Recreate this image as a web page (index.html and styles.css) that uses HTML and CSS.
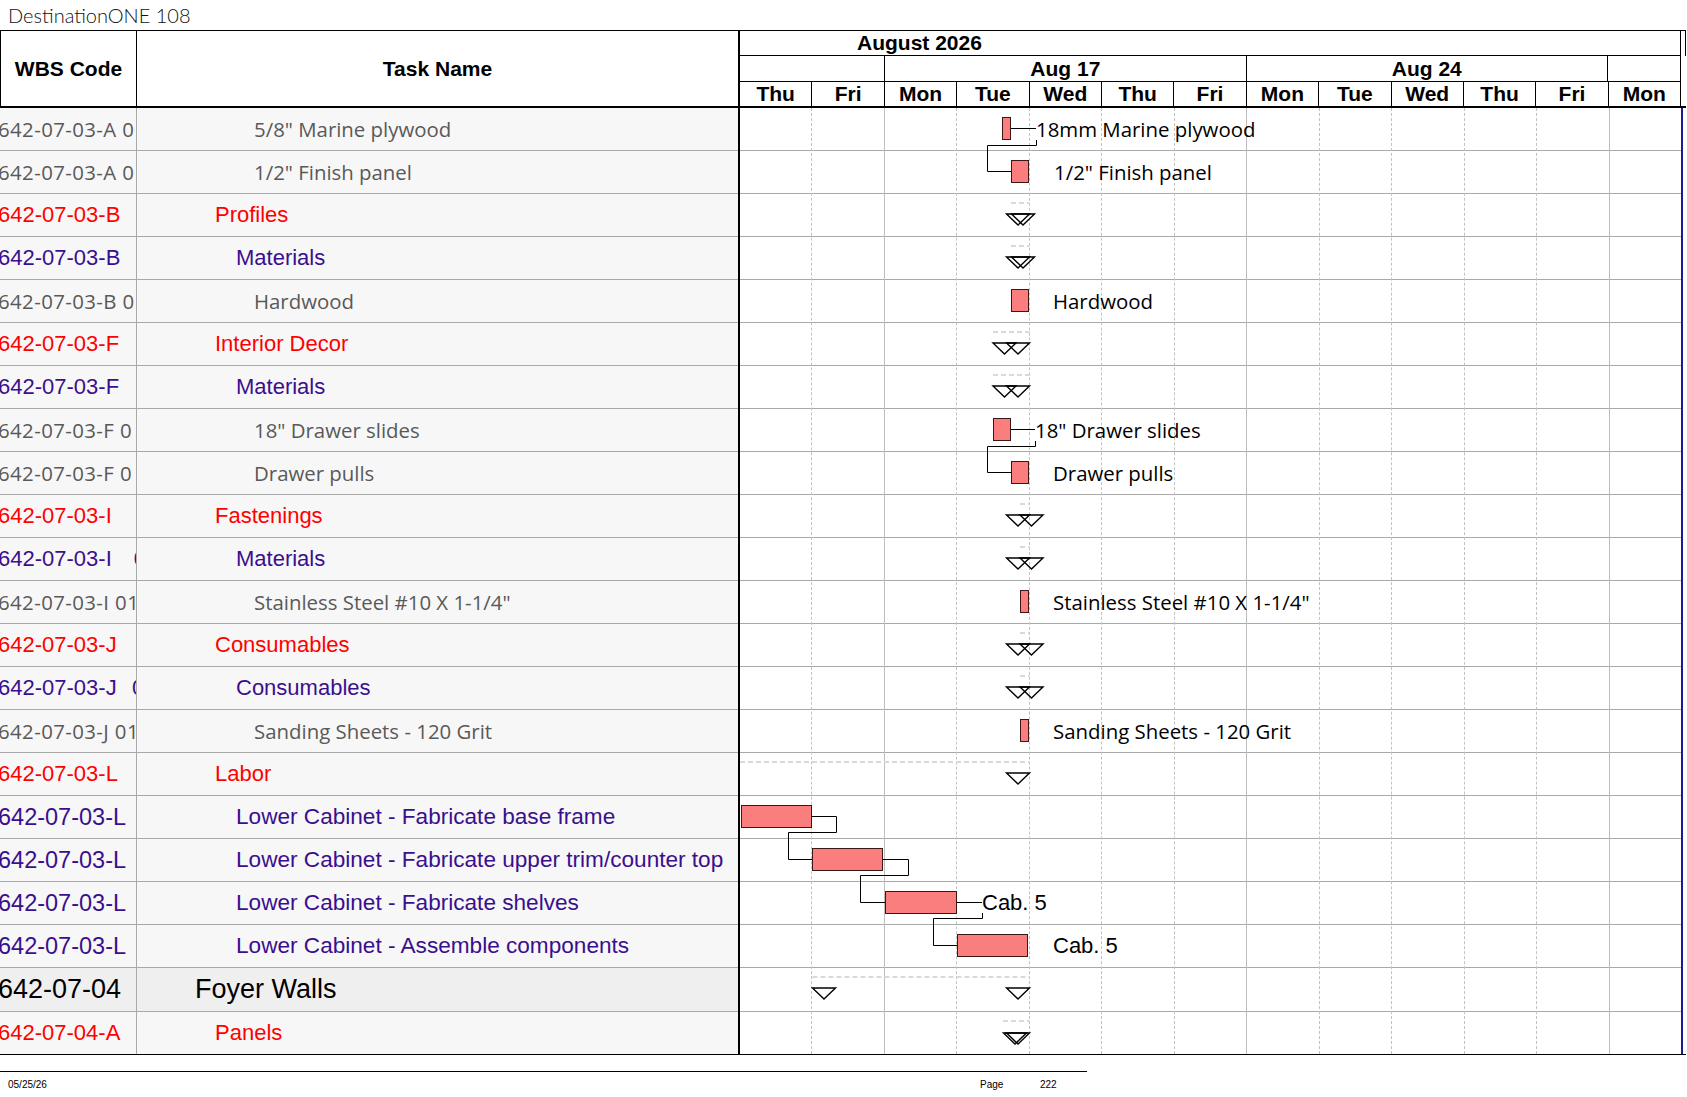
FILE: index.html
```html
<!DOCTYPE html>
<html lang="en">
<head>
<meta charset="utf-8">
<title>DestinationONE 108</title>
<link rel="stylesheet" href="styles.css">
</head>
<body>
<div class="title">DestinationONE 108</div>
<div class="sheet">
  <div class="head">
    <div class="hcell wbs">WBS Code</div>
    <div class="hcell task">Task Name</div>
    <div class="tscale">
      <div class="tier month">
        <div class="mcell">August 2026</div>
        <div class="mtail"></div>
      </div>
      <div class="tier weeks">
        <div class="wk s2"></div>
        <div class="wk s5">Aug 17</div>
        <div class="wk s5">Aug 24</div>
        <div class="wk s1"></div>
      </div>
      <div class="tier days">
        <div class="day">Thu</div><div class="day">Fri</div><div class="day">Mon</div><div class="day">Tue</div><div class="day">Wed</div><div class="day">Thu</div><div class="day">Fri</div><div class="day">Mon</div><div class="day">Tue</div><div class="day">Wed</div><div class="day">Thu</div><div class="day">Fri</div><div class="day">Mon</div>
      </div>
    </div>
  </div>
  <div class="body">
    <div class="grid">
      <div class="row item"><div class="c-wbs"><span>642-07-03-A 0</span></div><div class="c-task"><span>5/8" Marine plywood</span></div></div>
      <div class="row item"><div class="c-wbs"><span>642-07-03-A 0</span></div><div class="c-task"><span>1/2" Finish panel</span></div></div>
      <div class="row sum"><div class="c-wbs"><span>642-07-03-B</span></div><div class="c-task"><span>Profiles</span></div></div>
      <div class="row mat"><div class="c-wbs"><span>642-07-03-B</span></div><div class="c-task"><span>Materials</span></div></div>
      <div class="row item"><div class="c-wbs"><span>642-07-03-B 0</span></div><div class="c-task"><span>Hardwood</span></div></div>
      <div class="row sum"><div class="c-wbs"><span>642-07-03-F</span></div><div class="c-task"><span>Interior Decor</span></div></div>
      <div class="row mat"><div class="c-wbs"><span>642-07-03-F</span></div><div class="c-task"><span>Materials</span></div></div>
      <div class="row item"><div class="c-wbs"><span>642-07-03-F 0</span></div><div class="c-task"><span>18" Drawer slides</span></div></div>
      <div class="row item"><div class="c-wbs"><span>642-07-03-F 0</span></div><div class="c-task"><span>Drawer pulls</span></div></div>
      <div class="row sum"><div class="c-wbs"><span>642-07-03-I</span></div><div class="c-task"><span>Fastenings</span></div></div>
      <div class="row mat"><div class="c-wbs"><span>642-07-03-I&emsp;0</span></div><div class="c-task"><span>Materials</span></div></div>
      <div class="row item"><div class="c-wbs"><span>642-07-03-I 01</span></div><div class="c-task"><span>Stainless Steel #10 X 1-1/4"</span></div></div>
      <div class="row sum"><div class="c-wbs"><span>642-07-03-J</span></div><div class="c-task"><span>Consumables</span></div></div>
      <div class="row mat"><div class="c-wbs"><span>642-07-03-J&ensp;&thinsp;0</span></div><div class="c-task"><span>Consumables</span></div></div>
      <div class="row item"><div class="c-wbs"><span>642-07-03-J 01</span></div><div class="c-task"><span>Sanding Sheets - 120 Grit</span></div></div>
      <div class="row sum"><div class="c-wbs"><span>642-07-03-L</span></div><div class="c-task"><span>Labor</span></div></div>
      <div class="row mat lab"><div class="c-wbs"><span>642-07-03-L</span></div><div class="c-task"><span>Lower Cabinet - Fabricate base frame</span></div></div>
      <div class="row mat lab"><div class="c-wbs"><span>642-07-03-L</span></div><div class="c-task"><span>Lower Cabinet - Fabricate upper trim/counter top</span></div></div>
      <div class="row mat lab"><div class="c-wbs"><span>642-07-03-L</span></div><div class="c-task"><span>Lower Cabinet - Fabricate shelves</span></div></div>
      <div class="row mat lab"><div class="c-wbs"><span>642-07-03-L</span></div><div class="c-task"><span>Lower Cabinet - Assemble components</span></div></div>
      <div class="row top big"><div class="c-wbs"><span>642-07-04</span></div><div class="c-task"><span>Foyer Walls</span></div></div>
      <div class="row sum last"><div class="c-wbs"><span>642-07-04-A</span></div><div class="c-task"><span>Panels</span></div></div>
    </div>
    <div class="chart">
      <div class="cols">
        <div class="col"></div><div class="col mon"></div><div class="col"></div><div class="col"></div><div class="col"></div><div class="col"></div><div class="col mon"></div><div class="col"></div><div class="col"></div><div class="col"></div><div class="col"></div><div class="col mon"></div><div class="col"></div>
      </div>
      <div class="crow"></div><div class="crow"></div><div class="crow"></div><div class="crow"></div><div class="crow"></div><div class="crow"></div><div class="crow"></div><div class="crow"></div><div class="crow"></div><div class="crow"></div><div class="crow"></div><div class="crow"></div><div class="crow"></div><div class="crow"></div><div class="crow"></div><div class="crow"></div><div class="crow"></div><div class="crow"></div><div class="crow"></div><div class="crow"></div><div class="crow big"></div><div class="crow last"></div>
      <svg class="gfx" width="941" height="946" viewBox="0 0 941 946">
        <g class="sumline">
          <line x1="271" y1="95" x2="289.5" y2="95"/>
          <line x1="271" y1="138" x2="289.5" y2="138"/>
          <line x1="253" y1="224" x2="289.5" y2="224"/>
          <line x1="253" y1="267" x2="289.5" y2="267"/>
          <line x1="280" y1="396" x2="289.5" y2="396"/>
          <line x1="280" y1="439" x2="289.5" y2="439"/>
          <line x1="280" y1="525" x2="289.5" y2="525"/>
          <line x1="280" y1="568" x2="289.5" y2="568"/>
          <line x1="0" y1="654" x2="289.5" y2="654"/>
          <line x1="72.4" y1="869" x2="289.5" y2="869"/>
          <line x1="263" y1="913" x2="289.5" y2="913"/>
        </g>
        <g class="tri">
          <polygon points="266.5,106 289.5,106 278,117"/><polygon points="271.5,106 294.5,106 283,117"/>
          <polygon points="266.5,149 289.5,149 278,160"/><polygon points="271.5,149 294.5,149 283,160"/>
          <polygon points="253,235 276,235 264.5,246"/><polygon points="266.5,235 289.5,235 278,246"/>
          <polygon points="253,278 276,278 264.5,289"/><polygon points="266.5,278 289.5,278 278,289"/>
          <polygon points="266.5,407 289.5,407 278,418"/><polygon points="280,407 303,407 291.5,418"/>
          <polygon points="266.5,450 289.5,450 278,461"/><polygon points="280,450 303,450 291.5,461"/>
          <polygon points="266.5,536 289.5,536 278,547"/><polygon points="280,536 303,536 291.5,547"/>
          <polygon points="266.5,579 289.5,579 278,590"/><polygon points="280,579 303,579 291.5,590"/>
          <polygon points="266.5,665 289.5,665 278,676"/>
          <polygon points="72.5,880 95.5,880 84,891"/><polygon points="266.5,880 289.5,880 278,891"/>
          <polygon points="263.5,925 286.5,925 275,936"/><polygon points="266.5,925 289.5,925 278,936"/>
        </g>
        <g class="link">
          <path d="M271 20.5 H296"/>
          <path d="M296.5 32 V37.5 H247.5 V63.5 H271"/>
          <path d="M271 321.5 H295"/>
          <path d="M295.5 333 V338.5 H247.5 V364.5 H271"/>
          <path d="M72 708.5 H96.5 V724.5 H48.5 V751.5 H72"/>
          <path d="M143 751.5 H168.5 V767.5 H120.5 V794.5 H145"/>
          <path d="M217 794.5 H242"/>
          <path d="M242.5 805 V810.5 H193.5 V837.5 H217"/>
        </g>
        <g class="bar">
          <rect x="262.5" y="9.5" width="8" height="22"/>
          <rect x="271.5" y="52.5" width="17" height="22"/>
          <rect x="271.5" y="181.5" width="17" height="22"/>
          <rect x="253.5" y="310.5" width="17" height="22"/>
          <rect x="271.5" y="353.5" width="17" height="22"/>
          <rect x="280.5" y="482.5" width="8" height="22"/>
          <rect x="280.5" y="611.5" width="8" height="22"/>
          <rect x="1.5" y="697.5" width="70" height="22"/>
          <rect x="72.5" y="740.5" width="70" height="22"/>
          <rect x="145.5" y="783.5" width="71" height="22"/>
          <rect x="217.5" y="826.5" width="70" height="22"/>
        </g>
      </svg>
      <span class="lbl cal" style="left:296px;top:20.5px">18mm Marine plywood</span>
      <span class="lbl cal" style="left:314px;top:63.5px">1/2" Finish panel</span>
      <span class="lbl cal" style="left:313px;top:192.5px">Hardwood</span>
      <span class="lbl cal" style="left:295px;top:321.5px">18" Drawer slides</span>
      <span class="lbl cal" style="left:313px;top:364.5px">Drawer pulls</span>
      <span class="lbl cal" style="left:313px;top:493.5px">Stainless Steel #10 X 1-1/4"</span>
      <span class="lbl cal" style="left:313px;top:622.5px">Sanding Sheets - 120 Grit</span>
      <span class="lbl ari" style="left:242px;top:794.5px">Cab. 5</span>
      <span class="lbl ari" style="left:313px;top:837.5px">Cab. 5</span>
    </div>
  </div>
</div>
<div class="footer">
  <div class="f-date">05/25/26</div>
  <div class="f-page">Page</div>
  <div class="f-num">222</div>
</div>
</body>
</html>
```

FILE: styles.css
```css
* { box-sizing: border-box; }

body {
  margin: 0;
  width: 1687px;
  background: #ffffff;
  color: #000000;
  font-family: "Liberation Sans", Arial, sans-serif;
}

.title {
  height: 30px;
  padding-left: 8px;
  font-family: Lato, "Open Sans", sans-serif;
  font-weight: 300;
  font-size: 20px;
  line-height: 30px;
  color: #111111;
}

.sheet {
  width: 1686px;
  border-top: 1px solid #000;
  border-bottom: 1px solid #000;
}

/* ---------- header ---------- */
.head {
  display: flex;
  height: 77px;
  border-bottom: 2px solid #000;
}

.hcell {
  display: flex;
  align-items: center;
  justify-content: center;
  font-weight: bold;
  font-size: 21px;
}

.hcell.wbs {
  width: 137px;
  border-left: 1px solid #000;
  border-right: 1px solid #000;
}

.hcell.task {
  width: 603px;
  border-right: 2px solid #000;
}

.tscale {
  width: 946px;
  display: flex;
  flex-direction: column;
  font-weight: bold;
  font-size: 21px;
}

.tier {
  display: flex;
}

.month {
  height: 25px;
}

.mcell {
  width: 941px;
  border-right: 1px solid #000;
  border-bottom: 1px solid #000;
  padding-left: 117px;
  line-height: 24px;
}

.mtail {
  width: 5px;
  border-right: 1px solid #000;
}

.weeks {
  width: 941px;
  height: 26px;
  border-bottom: 1px solid #000;
}

.wk {
  flex-basis: 0;
  border-right: 1px solid #000;
  text-align: center;
  line-height: 25px;
}

.wk.s1 { flex-grow: 1; }
.wk.s2 { flex-grow: 2; }
.wk.s5 { flex-grow: 5; }

.days {
  width: 941px;
  height: 24px;
}

.day {
  flex: 1 1 0;
  border-right: 1px solid #000;
  text-align: center;
  line-height: 24px;
}

/* ---------- body ---------- */
.body {
  display: flex;
}

.grid {
  width: 740px;
  border-right: 2px solid #000;
}

.row {
  display: grid;
  grid-template-columns: 137px 1fr;
  height: 43px;
  border-bottom: 1px solid #a9a9a9;
  background: #f7f7f7;
  font-size: 22px;
}

.row.big {
  height: 44px;
  background: #efefef;
}

.row.last {
  height: 42px;
  border-bottom: none;
}

.c-wbs {
  display: flex;
  align-items: center;
  overflow: hidden;
  white-space: nowrap;
  border-right: 1px solid #a9a9a9;
}

.c-wbs span {
  margin-left: -2px;
}

.c-task {
  display: flex;
  align-items: center;
  overflow: hidden;
  white-space: nowrap;
}

.row.sum { color: #ff0000; }
.row.sum .c-task { padding-left: 78px; }

.row.mat { color: #3a0f8e; }
.row.mat .c-task { padding-left: 99px; }

.row.lab .c-task { font-size: 22.6px; }
.row.lab .c-wbs { font-size: 23.5px; }

.row.item {
  color: #595959;
  font-family: "Open Sans", sans-serif;
  font-size: 20.4px;
}
.row.item .c-wbs span { letter-spacing: 0.4px; }
.row.item .c-task { padding-left: 117px; }

.row.top {
  color: #000000;
  font-size: 27px;
}
.row.top .c-task { padding-left: 58px; }

/* ---------- chart ---------- */
.chart {
  position: relative;
  width: 943px;
  border-right: 2px solid #1c1c92;
}

.cols {
  position: absolute;
  inset: 0;
  display: flex;
}

.col {
  flex: 1 1 0;
  border-right: 1px dashed #c2c2c2;
}

.col.mon {
  border-right: 1px solid #bdbdbd;
}

.col:last-child {
  border-right: none;
}

.crow {
  height: 43px;
  border-bottom: 1px solid #a9a9a9;
}

.crow.big { height: 44px; }
.crow.last { height: 42px; border-bottom: none; }

.gfx {
  position: absolute;
  left: 0;
  top: 0;
  overflow: visible;
}

.sumline line {
  stroke: #d9d9d9;
  stroke-width: 2;
  stroke-dasharray: 5 3;
}

.tri polygon {
  fill: none;
  stroke: #000;
  stroke-width: 1.4;
  stroke-linejoin: miter;
}

.link path {
  fill: none;
  stroke: #000;
  stroke-width: 1;
}

.bar rect {
  fill: #fa7e7e;
  stroke: #3a1818;
  stroke-width: 1;
}

.lbl {
  position: absolute;
  white-space: nowrap;
  transform: translateY(-50%);
  color: #000;
}

.lbl.cal {
  font-family: "Open Sans", sans-serif;
  font-size: 20.4px;
  line-height: 24px;
}

.lbl.ari {
  font-family: "Liberation Sans", Arial, sans-serif;
  font-size: 22px;
  line-height: 24px;
}

/* ---------- footer ---------- */
.footer {
  display: flex;
  width: 1087px;
  margin-top: 16px;
  border-top: 1px solid #000;
  padding-top: 7px;
  font-size: 10px;
  line-height: 12px;
}

.f-date {
  flex: 1;
  padding-left: 8px;
}

.f-page {
  width: 60px;
}

.f-num {
  width: 47px;
}
```
